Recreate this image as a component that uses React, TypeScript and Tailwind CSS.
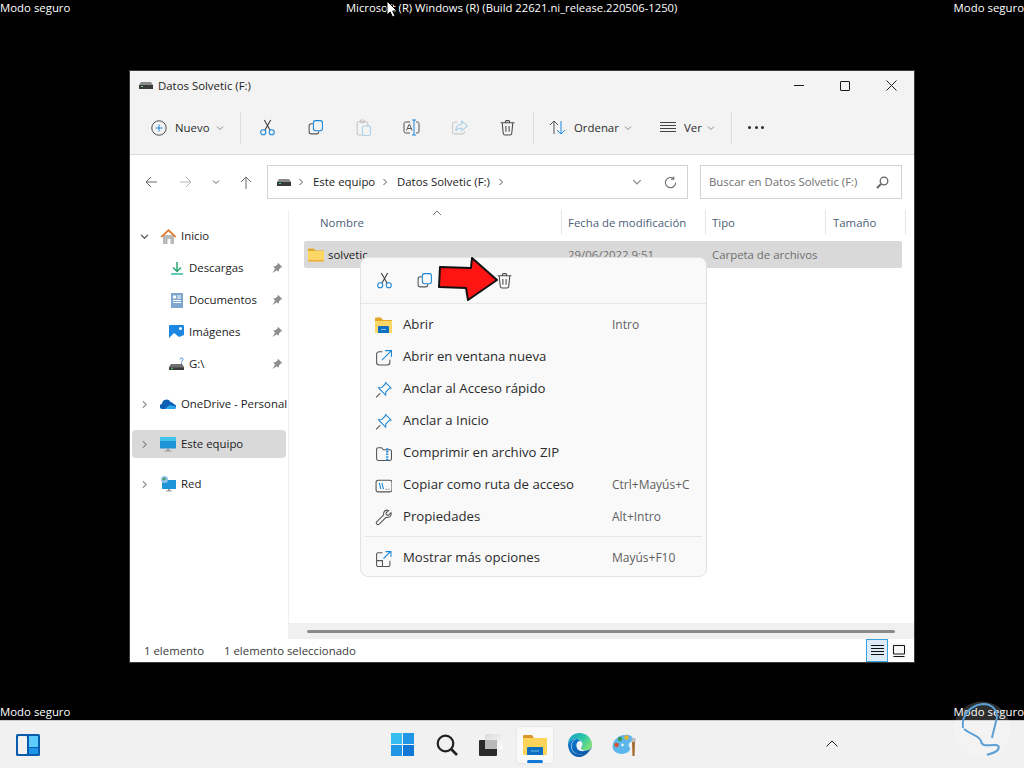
import type { ReactNode } from 'react'

const BLUE = '#1a86d8'
const INK = '#3c3c3c'

function Svg({ size = 16, children, className = '' }: { size?: number; children: ReactNode; className?: string }) {
  return (
    <svg width={size} height={size} viewBox="0 0 16 16" fill="none" strokeWidth="1" className={`shrink-0 ${className}`}>
      {children}
    </svg>
  )
}

function Chevron({ dir = 'down', color = '#8a8a8a', size = 8 }: { dir?: 'down' | 'right'; color?: string; size?: number }) {
  return (
    <svg width={size} height={size} viewBox="0 0 8 8" fill="none" stroke={color} strokeWidth="1" className="shrink-0">
      {dir === 'down' ? <path d="M1 2.5 4 5.5 7 2.5" /> : <path d="M2.5 1 5.5 4 2.5 7" />}
    </svg>
  )
}

function Drive() {
  return (
    <svg width="14" height="7" viewBox="0 0 14 7" className="shrink-0">
      <path d="M2 0h10l2 3v3H0V3z" fill="#8a8a8a" />
      <rect x="0" y="3" width="14" height="4" fill="#3b3b3b" />
      <rect x="2" y="4" width="2" height="1" fill="#4fdc7a" />
    </svg>
  )
}

function Cut() {
  return (
    <Svg size={17}>
      <path d="M5 1l5.500 9.500M11 1 5.500 10.500" stroke={INK} />
      <circle cx="4" cy="12.500" r="2.400" stroke={BLUE} />
      <circle cx="12" cy="12.500" r="2.400" stroke={BLUE} />
    </Svg>
  )
}

function Copy() {
  return (
    <Svg size={17}>
      <rect x="6" y="1.500" width="8.500" height="9.500" rx="2" stroke={BLUE} />
      <path d="M5.500 4.500H4a2 2 0 0 0-2 2V12a2 2 0 0 0 2 2h5a2 2 0 0 0 2-2v-.5" stroke="#555" />
    </Svg>
  )
}

function Paste() {
  return (
    <Svg size={17}>
      <rect x="2" y="2.500" width="10" height="12.500" rx="1.500" stroke="#c4c4c4" />
      <rect x="5" y="1" width="4" height="2.500" rx="1" stroke="#c4c4c4" />
      <rect x="7" y="6.500" width="7.500" height="9" rx="1.500" stroke="#a9cfe9" fill="#f3f3f3" />
    </Svg>
  )
}

function Rename() {
  return (
    <svg width="17" height="17" viewBox="0 0 17 17" fill="none" className="shrink-0">
      <path d="M7 3H2.500A1.500 1.500 0 0 0 1 4.500v8A1.500 1.500 0 0 0 2.500 14H7M13 3h1.500A1.500 1.500 0 0 1 16 4.500v8a1.500 1.500 0 0 1-1.500 1.500H13" stroke="#555" />
      <path d="M3.500 11.500 6 5.500h.6l2.500 6M4.500 9.500h3.800" stroke="#555" />
      <path d="M9 1h4M9 16h4M11 1v15" stroke={BLUE} />
    </svg>
  )
}

function Share() {
  return (
    <Svg size={17}>
      <path d="M6 3H3a1.500 1.500 0 0 0-1.500 1.500v8A1.500 1.500 0 0 0 3 14h8a1.500 1.500 0 0 0 1.500-1.500V11" stroke="#c9c9c9" />
      <path d="M10 2l5.500 4.500L10 11V8.500c-3 0-4.500 1-5.500 3 0-4 2-6.500 5.500-6.500z" stroke="#a9cfe9" />
    </Svg>
  )
}

function Trash() {
  return (
    <Svg size={17}>
      <path d="M1.500 3.500h13M6 3.500V2.500a1 1 0 0 1 1-1h2a1 1 0 0 1 1 1v1M3 3.500l1 10a1.500 1.500 0 0 0 1.500 1.500h5a1.500 1.500 0 0 0 1.500-1.500l1-10M6.500 6.500v5.500M9.500 6.500v5.500" stroke="#4b4b4b" />
    </Svg>
  )
}

function Pin() {
  return (
    <svg width="12" height="12" viewBox="0 0 12 12" className="shrink-0">
      <path d="M7 .8 11.200 5 9.800 5.500 8 7.500 7.600 10 5.800 8.300 1.500 11 4 6.500 2.200 4.500 4.700 4 6.600 2.200z" fill="#8f8f8f" />
    </svg>
  )
}

function MenuPin() {
  return (
    <Svg size={17}>
      <path d="M10 1.500l5 5-1.500.5-3.200 3.200-.3 3-6.700-6.700 3-.3L9.500 3z" stroke={BLUE} />
      <path d="M5 11.500 1 15.500" stroke="#555" />
    </Svg>
  )
}

function SideRow({ icon, label, arrow, pin, active, sub }: { icon: ReactNode; label: string; arrow?: 'down' | 'right'; pin?: boolean; active?: boolean; sub?: boolean }) {
  return (
    <div className="h-8 flex items-center">
      <div className={`h-7 w-[154px] ml-0.5 rounded flex items-center ${active ? 'bg-[#d9d9d9]' : ''}`}>
        <span className="w-7 pl-2 shrink-0">
          {arrow && <Chevron dir={arrow} size={9} color={arrow === 'down' ? '#444' : '#8a8a8a'} />}
        </span>
        <span className={`shrink-0 flex justify-start ${sub ? 'ml-2.5 w-[19px]' : 'w-[21px]'}`}>{icon}</span>
        <span className="whitespace-nowrap">{label}</span>
        {pin && <span className="ml-auto mr-[3px]"><Pin /></span>}
      </div>
    </div>
  )
}

function MenuRow({ icon, label, shortcut }: { icon: ReactNode; label: string; shortcut?: string }) {
  return (
    <div className="h-8 flex items-center">
      <span className="w-[42px] pl-3.5 shrink-0">{icon}</span>
      <span className="w-[209px] shrink-0 text-[13.2px] text-[#2b2b2b] whitespace-nowrap">{label}</span>
      {shortcut && <span className="text-[12px] text-[#5f5f5f] whitespace-nowrap">{shortcut}</span>}
    </div>
  )
}

function Folder() {
  return (
    <svg width="16" height="14" viewBox="0 0 16 14" className="shrink-0">
      <path d="M0 1.500A1 1 0 0 1 1 .5h4.500L7.500 2.500H16V4H0z" fill="#e4a72a" />
      <path d="M0 3h16v9.500a1 1 0 0 1-1 1H1a1 1 0 0 1-1-1z" fill="#fdd766" />
      <path d="M0 12h16v.5a1 1 0 0 1-1 1H1a1 1 0 0 1-1-1z" fill="#e9b13c" />
    </svg>
  )
}

function Cursor() {
  return (
    <svg width="12" height="18" viewBox="0 0 12 18" className="absolute left-[386px] top-0">
      <path d="M1 1v14l3.200-3 2.300 5 2.500-1-2.300-5H11z" fill="#fff" stroke="#000" strokeWidth="1" />
    </svg>
  )
}

export default function App() {
  return (
    <div className="relative w-[1024px] h-[768px] bg-black flex flex-col overflow-hidden font-['Open_Sans',sans-serif] text-[11.4px] text-[#1c1c1c]">
      <div className="h-[15px] pt-px flex text-white leading-[14px] shrink-0 whitespace-nowrap">
        <span className="w-[346px]">Modo seguro</span>
        <span className="flex-1 text-[11.25px]">Microsoft (R) Windows (R) (Build 22621.ni_release.220506-1250)</span>
        <span>Modo seguro</span>
      </div>
      <Cursor />

      <div className="flex-1 min-h-0">
        <div className="mt-[55px] ml-[129px] w-[786px] h-[593px] bg-white border border-[#3b3b3b] flex flex-col relative">
          {/* title bar */}
          <div className="h-[29px] bg-[#f3f3f3] flex items-center pl-[9px] shrink-0">
            <Drive />
            <span className="ml-[5px] mt-[1px]">Datos Solvetic (F:)</span>
            <div className="ml-auto flex items-center">
              <div className="w-[46px] flex justify-center"><div className="w-[10px] h-px bg-[#1a1a1a]" /></div>
              <div className="w-[46px] flex justify-center"><div className="w-[10px] h-[10px] border border-[#1a1a1a] rounded-[1px]" /></div>
              <div className="w-[46px] flex justify-center">
                <svg width="11" height="11" viewBox="0 0 11 11" stroke="#1a1a1a"><path d="M.5.5l10 10M10.500.5l-10 10" /></svg>
              </div>
            </div>
          </div>

          {/* toolbar */}
          <div className="h-[55px] bg-[#f3f3f3] border-b border-[#dedede] flex items-center pl-[21px] pt-px shrink-0">
            <svg width="16" height="16" viewBox="0 0 16 16" fill="none" className="shrink-0">
              <circle cx="8" cy="8" r="7.200" stroke="#4b4b4b" />
              <path d="M8 4.500v7M4.500 8h7" stroke={BLUE} />
            </svg>
            <span className="ml-2 w-[41px] text-[#2b2b2b]">Nuevo</span>
            <Chevron />
            <div className="w-px h-8 bg-[#dcdcdc] ml-4" />
            <div className="flex ml-[2px]">
              <div className="w-12 flex justify-center"><Cut /></div>
              <div className="w-12 flex justify-center"><Copy /></div>
              <div className="w-12 flex justify-center"><Paste /></div>
              <div className="w-12 flex justify-center"><Rename /></div>
              <div className="w-12 flex justify-center"><Share /></div>
              <div className="w-12 flex justify-center"><Trash /></div>
            </div>
            <div className="w-px h-8 bg-[#dcdcdc] ml-[2px]" />
            <svg width="17" height="17" viewBox="0 0 17 17" fill="none" className="ml-[15px] shrink-0">
              <path d="M5 15V2M1 6l4-4 4 4" stroke="#555" />
              <path d="M12 2v13M8 11l4 4 4-4" stroke={BLUE} />
            </svg>
            <span className="ml-2 w-[50px] text-[#2b2b2b]">Ordenar</span>
            <Chevron />
            <svg width="16" height="11" viewBox="0 0 16 11" stroke="#444" className="ml-[28px] shrink-0">
              <path d="M0 .5h16M0 3.500h16M0 6.500h16M0 9.500h16" />
            </svg>
            <span className="ml-2 w-[23px] text-[#2b2b2b]">Ver</span>
            <Chevron />
            <div className="w-px h-8 bg-[#dcdcdc] ml-4" />
            <div className="ml-[16px] flex gap-[3.500px]">
              <span className="w-[3px] h-[3px] rounded-full bg-[#2b2b2b]" />
              <span className="w-[3px] h-[3px] rounded-full bg-[#2b2b2b]" />
              <span className="w-[3px] h-[3px] rounded-full bg-[#2b2b2b]" />
            </div>
          </div>

          {/* nav row */}
          <div className="h-[55px] flex items-center shrink-0 pl-[15px] pb-px">
            <svg width="12" height="12" viewBox="0 0 12 12" fill="none" stroke="#666" className="shrink-0"><path d="M12 6H1M6 1 1 6l5 5" /></svg>
            <svg width="12" height="12" viewBox="0 0 12 12" fill="none" stroke="#b5b5b5" className="ml-[23px] shrink-0"><path d="M0 6h11M6 1l5 5-5 5" /></svg>
            <span className="ml-5"><Chevron color="#666" /></span>
            <svg width="12" height="13" viewBox="0 0 12 13" fill="none" stroke="#666" className="ml-5 shrink-0"><path d="M6 13V1M1 6l5-5 5 5" /></svg>
            <div className="ml-[15px] w-[421px] h-[34px] border border-[#d2d2d2] flex items-center pl-[9px]">
              <Drive />
              <span className="ml-[6px]"><Chevron dir="right" color="#555" /></span>
              <span className="ml-2 w-[61px] whitespace-nowrap">Este equipo</span>
              <span className="ml-[7px]"><Chevron dir="right" color="#555" /></span>
              <span className="ml-2 w-[94px] whitespace-nowrap">Datos Solvetic (F:)</span>
              <span className="ml-[6px]"><Chevron dir="right" color="#555" /></span>
              <span className="ml-[127px]"><Chevron color="#888" size={10} /></span>
              <svg width="13" height="13" viewBox="0 0 14 14" fill="none" stroke="#6e6e6e" strokeWidth="1.200" className="ml-[22px] shrink-0">
                <path d="M12.500 7A5.500 5.500 0 1 1 10 2.500M10.500 .5v3h-3" />
              </svg>
            </div>
            <div className="ml-3 w-[202px] h-[34px] border border-[#d2d2d2] flex items-center pl-2 text-[#6f6f6f]">
              <span className="w-[167px] whitespace-nowrap">Buscar en Datos Solvetic (F:)</span>
              <svg width="13" height="13" viewBox="0 0 13 13" fill="none" className="shrink-0">
                <circle cx="8" cy="5" r="3.800" stroke="#666" strokeWidth="1.300" />
                <path d="M5 8 1 12" stroke="#666" strokeWidth="2" />
              </svg>
            </div>
          </div>

          {/* body */}
          <div className="flex-1 min-h-0 flex">
            <div className="w-[159px] shrink-0 border-r border-[#efefef] pt-2.5">
              <SideRow arrow="down" label="Inicio" icon={
                <svg width="17" height="16" viewBox="0 0 17 16">
                  <path d="M3 7h11v9h-3.500v-5h-3v5H3z" fill="#b9b9b9" />
                  <path d="M8.500 1 16.500 8.500 15 9.500 8.500 3.500 2 9.500.5 8.500z" fill="#e0792e" />
                </svg>
              } />
              <SideRow sub pin label="Descargas" icon={
                <svg width="14" height="14" viewBox="0 0 14 14" fill="none">
                  <path d="M7 1v9M3 6.500 7 10.500l4-4" stroke="#2aa86f" strokeWidth="1.500" />
                  <path d="M1 13h12" stroke="#2ab9a2" strokeWidth="1.500" />
                </svg>
              } />
              <SideRow sub pin label="Documentos" icon={
                <svg width="14" height="15" viewBox="0 0 14 15">
                  <rect x="1" y="0" width="12" height="15" fill="#7fa6cf" />
                  <path d="M7 3h4M7 5h4M3 7.500h8M3 9.500h8" stroke="#fff" strokeWidth="1" />
                  <rect x="3" y="2.500" width="3" height="3" fill="#fff" />
                </svg>
              } />
              <SideRow sub pin label="Imágenes" icon={
                <svg width="15" height="15" viewBox="0 0 15 15" className="ml-[-1px]">
                  <rect width="15" height="15" rx="1" fill="#1b87e0" />
                  <path d="M0 13 5 8l5 4 5-2v5H0z" fill="#fff" />
                  <circle cx="11.500" cy="3.500" r="1.500" fill="#fff" />
                </svg>
              } />
              <SideRow sub pin label="G:\" icon={
                <svg width="15" height="14" viewBox="0 0 15 14" className="ml-[-1px]">
                  <path d="M2 7h11l2 3v3H0v-3z" fill="#6f6f6f" />
                  <rect y="10.500" width="15" height="2.500" fill="#3c3c3c" />
                  <rect x="2" y="11.300" width="2" height="1" fill="#4fdc7a" />
                  <path d="M11 2.500C11 .5 14 .5 14 2.300 14 3.800 12.500 3.600 12.500 5.300M12.500 6v1" stroke="#2b7fd4" strokeWidth=".9" fill="none" />
                </svg>
              } />
              <div className="h-2" />
              <SideRow arrow="right" label="OneDrive - Personal" icon={
                <svg width="16" height="10" viewBox="0 0 16 10">
                  <path d="M2.500 10A2.500 2.500 0 0 1 2 5 4.500 4.500 0 0 1 10.500 3 3.500 3.500 0 0 1 13.500 5 2.500 2.500 0 0 1 13.500 10z" fill="#0d5fb3" />
                  <path d="M5 10 9.500 6l6 1.500c1 1.500 0 2.500-2 2.500z" fill="#2aa8ea" />
                </svg>
              } />
              <div className="h-2" />
              <SideRow arrow="right" active label="Este equipo" icon={
                <svg width="16" height="15" viewBox="0 0 16 15">
                  <rect width="16" height="11.500" rx=".5" fill="#1d93d8" />
                  <rect width="16" height="4" fill="#3fc3e8" />
                  <path d="M7 11.500h2v2H7zM4.500 13.500h7v1h-7z" fill="#9a9a9a" />
                </svg>
              } />
              <div className="h-2" />
              <SideRow arrow="right" label="Red" icon={
                <svg width="16" height="16" viewBox="0 0 16 16">
                  <rect x="2" y="4" width="14" height="9" rx=".5" fill="#1d93d8" />
                  <path d="M8 13h2v1.500H8zM6 14.500h6v1H6z" fill="#9a9a9a" />
                  <circle cx="4.500" cy="3.500" r="3.500" fill="#8fc2ea" />
                  <path d="M2.500 2.500l2-1 1.500 1-1 1.500-2 .5z" fill="#4f9a5a" />
                </svg>
              } />
            </div>

            <div className="flex-1 min-w-0 flex flex-col relative">
              <div className="flex-1 min-h-0 pl-[15px] pr-[11px]">
                <div className="h-[25px] flex items-center text-[#4c607a] relative">
                  <div className="w-[258px] shrink-0 pl-4 h-full flex items-center border-r border-[#e5e5e5]">Nombre</div>
                  <div className="w-[144px] shrink-0 pl-1.5 h-full flex items-center border-r border-[#e5e5e5] whitespace-nowrap">Fecha de modificación</div>
                  <div className="w-[120px] shrink-0 pl-1.5 h-full flex items-center border-r border-[#e5e5e5]">Tipo</div>
                  <div className="w-[80px] shrink-0 pl-[7px] h-full flex items-center border-r border-[#e5e5e5]">Tamaño</div>
                  <svg width="10" height="6" viewBox="0 0 10 6" fill="none" stroke="#777" className="absolute left-[128px] top-0"><path d="M1 5l4-4 4 4" /></svg>
                </div>
                <div className="mt-1.5 h-[27px] w-[598px] bg-[#d9d9d9] rounded-[2px] flex items-center pl-1">
                  <Folder />
                  <span className="ml-1 w-[240px]">solvetic</span>
                  <span className="w-[144px] text-[#6f6f6f] whitespace-nowrap">29/06/2022 9:51</span>
                  <span className="text-[#6f6f6f] whitespace-nowrap">Carpeta de archivos</span>
                </div>
              </div>
              <div className="h-4 bg-[#f0f0f0] shrink-0 flex items-center pl-[18px]">
                <div className="w-[588px] h-[3px] rounded-full bg-[#8a8a8a]" />
              </div>
            </div>
          </div>

          {/* status bar */}
          <div className="h-[23px] shrink-0 flex items-center pl-[14px] text-[#3a3a3a]">
            <span className="w-20">1 elemento</span>
            <span>1 elemento seleccionado</span>
            <div className="ml-auto mr-[7px] flex items-center">
              <div className="w-[22px] h-[23px] border border-[#36a3dc] bg-[#dcebf7] flex items-center justify-center">
                <svg width="13" height="11" viewBox="0 0 13 11" stroke="#111"><path d="M0 .5h13M0 3.500h13M0 6.500h13M0 9.500h13" /></svg>
              </div>
              <div className="w-4 h-4 ml-[3px] bg-[#f7f7f7] flex items-center justify-center">
                <svg width="12" height="12" viewBox="0 0 12 12" fill="none" stroke="#111"><path d="M.5.500h11v8.500H.5zM.5 11.500h11" /></svg>
              </div>
            </div>
          </div>

          {/* context menu */}
          <div className="absolute left-[230px] top-[186px] w-[347px] h-[320px] bg-[#f9f9f9] border border-[#e2e2e2] rounded-lg flex flex-col">
            <div className="h-[46px] flex items-center border-b border-[#e6e6e6] shrink-0">
              <div className="ml-[15px] w-10 flex"><Cut /></div>
              <div className="w-10 flex"><Copy /></div>
              <div className="w-10 ml-10 flex"><Trash /></div>
            </div>
            <div className="pt-[5px]">
              <MenuRow label="Abrir" shortcut="Intro" icon={
                <svg width="17" height="16" viewBox="0 0 17 16" className="shrink-0">
                  <path d="M0 1.500a1 1 0 0 1 1-1h5L8 3h9v2H0z" fill="#e4a72a" />
                  <path d="M0 4h17v12H0z" fill="#fdd766" />
                  <path d="M3 10a1 1 0 0 1 1-1h9a1 1 0 0 1 1 1v6H3z" fill="#0f70c2" />
                  <path d="M6 12.500h5" stroke="#7fc0ee" strokeWidth="1" />
                </svg>
              } />
              <MenuRow label="Abrir en ventana nueva" icon={
                <Svg size={17}>
                  <path d="M7 2.500H4A2.500 2.500 0 0 0 1.500 5v7.500A2.500 2.500 0 0 0 4 15h7.500a2.500 2.500 0 0 0 2.500-2.500V10" stroke="#555" />
                  <path d="M6.500 10.500 15 2M9.500 1.500H15.500V7.500" stroke={BLUE} />
                </Svg>
              } />
              <MenuRow label="Anclar al Acceso rápido" icon={<MenuPin />} />
              <MenuRow label="Anclar a Inicio" icon={<MenuPin />} />
              <MenuRow label="Comprimir en archivo ZIP" icon={
                <Svg size={17}>
                  <path d="M1.500 4a1.500 1.500 0 0 1 1.500-1.500h3L8 4.500h6A1.500 1.500 0 0 1 15.500 6v7a1.500 1.500 0 0 1-1.500 1.500H3A1.500 1.500 0 0 1 1.500 13z" stroke="#555" />
                  <path d="M11.500 3v12" stroke={BLUE} strokeWidth="2" strokeDasharray="1.500 1" />
                </Svg>
              } />
              <MenuRow label="Copiar como ruta de acceso" shortcut="Ctrl+Mayús+C" icon={
                <Svg size={17}>
                  <rect x="1" y="3" width="15" height="11" rx="2" stroke="#555" />
                  <path d="M4 5.500l1.500 6M6.500 5.500l1.500 6" stroke={BLUE} />
                  <path d="M10 11.500h1M12.500 11.500h1" stroke="#555" />
                </Svg>
              } />
              <MenuRow label="Propiedades" shortcut="Alt+Intro" icon={
                <Svg size={17}>
                  <path d="M15 3.500 12.500 6 10.800 5.500 10.300 3.800 12.800 1.300C10 .3 7.500 2.500 8.200 5.500L1.600 12c-1.200 1.500.8 3.500 2.300 2.300l6.500-6.500C13.500 8.500 16 6 15 3.500z" stroke="#555" />
                </Svg>
              } />
            </div>
            <div className="h-px bg-[#e6e6e6] mt-[3px] mx-1" />
            <div className="mt-[5px]">
              <MenuRow label="Mostrar más opciones" shortcut="Mayús+F10" icon={
                <Svg size={17}>
                  <path d="M7 2.500H3A1.500 1.500 0 0 0 1.500 4v10A1.500 1.500 0 0 0 3 15.500h9.500A1.500 1.500 0 0 0 14 14v-4M1.500 10H7v5.500" stroke="#555" />
                  <path d="M8 8l6.500-6.500M10 1.500h5v5" stroke={BLUE} />
                </Svg>
              } />
            </div>
          </div>

          {/* red arrow annotation */}
          <svg width="64" height="48" viewBox="0 0 64 48" className="absolute left-[308px] top-[186px]">
            <path d="M2 10 1 30 28 31 30 43 59 23 34 1 33 11z" fill="#ff1414" stroke="#111" strokeWidth="2" strokeLinejoin="round" />
          </svg>
        </div>
      </div>

      <div className="h-[14px] flex justify-between text-white leading-[14px] mb-px shrink-0 whitespace-nowrap">
        <span>Modo seguro</span>
        <span>Modo seguro</span>
      </div>

      {/* taskbar */}
      <div className="h-12 bg-[#f1f1f1] border-t border-[#c9c9c9] flex items-center relative shrink-0">
        <svg width="24" height="22" viewBox="0 0 24 22" className="ml-4 shrink-0">
          <rect width="24" height="22" rx="1.500" fill="#0a5dad" />
          <rect x="2" y="2" width="9" height="18" rx="1" fill="#f2f2f2" />
          <rect x="13" y="2" width="9" height="11" fill="#5ccdfc" />
          <rect x="13" y="14" width="9" height="6" fill="#1f96ea" />
        </svg>
        <div className="ml-[351px] w-[23px] h-[23px] grid grid-cols-2 gap-px shrink-0">
          <div className="bg-[#35bdf0]" /><div className="bg-[#2097e6]" />
          <div className="bg-[#2097e6]" /><div className="bg-[#0f78d6]" />
        </div>
        <svg width="22" height="22" viewBox="0 0 22 22" fill="none" stroke="#222" className="ml-[22px] shrink-0">
          <circle cx="9.500" cy="9.500" r="7.800" strokeWidth="2.200" />
          <path d="M15 15l6 6" strokeWidth="2.600" />
        </svg>
        <svg width="24" height="22" viewBox="0 0 24 22" className="ml-[21px] shrink-0">
          <defs>
            <linearGradient id="tv" x1="0" y1="0" x2="1" y2="1">
              <stop offset="0" stopColor="#d9d9d9" />
              <stop offset="1" stopColor="#ffffff" />
            </linearGradient>
          </defs>
          <rect x="6" y="0" width="18" height="15" rx="1" fill="url(#tv)" />
          <rect x="0" y="6" width="18" height="16" rx="1" fill="#2a2a2a" />
          <rect x="6" y="6" width="12" height="9" fill="#b9b9b9" />
        </svg>
        <div className="ml-[13px] w-[38px] h-[38px] bg-[#f9f9f9] border border-[#e8e8e8] rounded flex flex-col items-center pt-[7px] relative shrink-0">
          <svg width="24" height="22" viewBox="0 0 24 22">
            <path d="M0 2a1 1 0 0 1 1-1h8l2 3H0z" fill="#d9962c" />
            <path d="M0 4h24v16a1 1 0 0 1-1 1H1a1 1 0 0 1-1-1z" fill="#fdd45a" />
            <path d="M4 14a1 1 0 0 1 1-1h14a1 1 0 0 1 1 1v7H4z" fill="#0f70c2" />
            <path d="M8 17h8" stroke="#6fb7ea" strokeWidth="1" />
          </svg>
          <div className="absolute bottom-0 w-4 h-[3px] rounded-full bg-[#0f78d6]" />
        </div>
        <svg width="25" height="24" viewBox="0 0 25 24" className="ml-[13px] shrink-0">
          <defs>
            <linearGradient id="edgeTop" x1="0" y1="0" x2="1" y2="0.6">
              <stop offset="0" stopColor="#1a9ad6" />
              <stop offset="0.6" stopColor="#2cc8a4" />
              <stop offset="1" stopColor="#7be07a" />
            </linearGradient>
            <linearGradient id="edgeLow" x1="0" y1="0" x2="1" y2="1">
              <stop offset="0" stopColor="#0c7bd0" />
              <stop offset="1" stopColor="#0a4fa0" />
            </linearGradient>
          </defs>
          <path d="M1 11C1 4.500 6.500 0 12.500 0 19.500 0 25 5.500 25 12c0 3.500-3 5.500-6.500 5.500-2.500 0-4.500-1-4.500-2.500 0-1 1.500-1.500 1.500-4 0-3-3-5-6-5C6 6 2.500 8 1 11z" fill="url(#edgeTop)" />
          <path d="M1 11c1.500-3 5-5 8-5-3 1-5 4-5 7 0 5 4.500 8.500 9 8.500 3.500 0 6.500-1 9-3.500-2 3.500-6 6-10 6C5.500 24 1 18 1 11z" fill="url(#edgeLow)" />
          <path d="M9 6c3 0 6 2 6.500 5 0 2.500-1.500 3-1.500 4 0 1.500 2 2.500 4.500 2.500 3.500 0 6.500-2 6.500-5.500 0 0 .5 3.500-3.500 7-2.500 2-5.500 2.500-8 2.500-4.500 0-9-3.500-9-8.500 0-3 2-6 5-7z" fill="url(#edgeLow)" />
          <path d="M14 15c0 1.500 2 2.500 4.500 2.500C15 19 10 18 9.500 13.500 9 10 11 8 13 8c1.500.5 2.500 1.500 2.500 3 0 2.500-1.500 3-1.500 4z" fill="#eef5f7" />
        </svg>
        <svg width="26" height="25" viewBox="0 0 26 25" className="ml-5 shrink-0">
          <path d="M1 12C3 4 14 1 19 4c3 2 2 5 0 6-3 1-3 4-1 6 1 3-4 6-8 6-6 0-11-4-9-10z" fill="#5cb6ec" />
          <circle cx="8" cy="7" r="2.200" fill="#3d9a52" />
          <circle cx="14.500" cy="5.500" r="2.200" fill="#e9b628" />
          <circle cx="4.500" cy="13" r="2.200" fill="#d8542e" />
          <path d="M9 13h3M10.500 11.500v3" stroke="#fff" strokeWidth="1" />
          <path d="M20 9h3l-.5 15h-2z" fill="#a2672c" />
          <rect x="19.500" y="6" width="4" height="4" fill="#bdbdbd" />
        </svg>
        <svg width="12" height="7" viewBox="0 0 12 7" fill="none" stroke="#222" className="absolute left-[826px] top-[19px]">
          <path d="M.5 6.500 6 1l5.500 5.500" />
        </svg>
      </div>

      {/* watermark */}
      <svg width="58" height="58" viewBox="0 0 58 58" className="absolute left-[953px] top-[701px]">
        <circle cx="29" cy="29" r="28.500" fill="#ffffff" fillOpacity=".18" />
        <path d="M10 27C8 14 18 4 30 3 41 3 46 12 43 20 42 26 40 31 39 37M11 28C18 34 26 34 28 40 29 46 34 44 42 44 48 44 46 49 42 51 38 53 36 53 34 54" fill="none" stroke="#5b9fd4" strokeWidth="2" />
      </svg>
    </div>
  )
}
